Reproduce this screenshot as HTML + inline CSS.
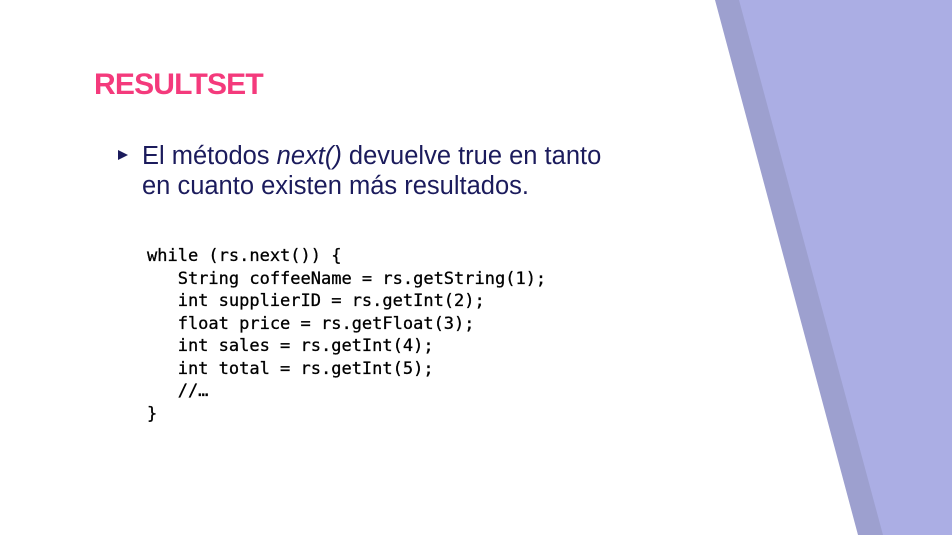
<!DOCTYPE html>
<html><head><meta charset="utf-8"><style>
html,body{margin:0;padding:0}
body{width:952px;height:535px;position:relative;overflow:hidden;background:#fff;font-family:"Liberation Sans",sans-serif}
svg{position:absolute;left:0;top:0}
.t{position:absolute;left:94px;top:68px;font-size:30px;font-weight:bold;color:#f43a7c;letter-spacing:-0.8px}
.b{position:absolute;left:142px;top:141px;font-size:25.5px;line-height:30px;color:#1b1b5c;letter-spacing:0px}
.bul{position:absolute;left:118px;top:150px;width:0;height:0;border-left:10px solid #1b1b5c;border-top:5px solid transparent;border-bottom:5px solid transparent}
pre{position:absolute;left:147px;top:245px;margin:0;font-family:"DejaVu Sans Mono","Liberation Mono",monospace;font-size:17px;line-height:22.5px;color:#000;-webkit-text-stroke:0.3px #000}
</style></head><body>
<svg width="952" height="535"><polygon points="715,0 952,0 952,535 858,535" fill="#9da0cf"/><polygon points="739,0 952,0 952,535 883,535" fill="#abaee4"/></svg>
<div class="t">RESULTSET</div>
<div class="bul"></div>
<div class="b">El métodos <i>next()</i> devuelve true en tanto<br>en cuanto existen más resultados.</div>
<pre>while (rs.next()) {
   String coffeeName = rs.getString(1);
   int supplierID = rs.getInt(2);
   float price = rs.getFloat(3);
   int sales = rs.getInt(4);
   int total = rs.getInt(5);
   //…
}</pre>
</body></html>
